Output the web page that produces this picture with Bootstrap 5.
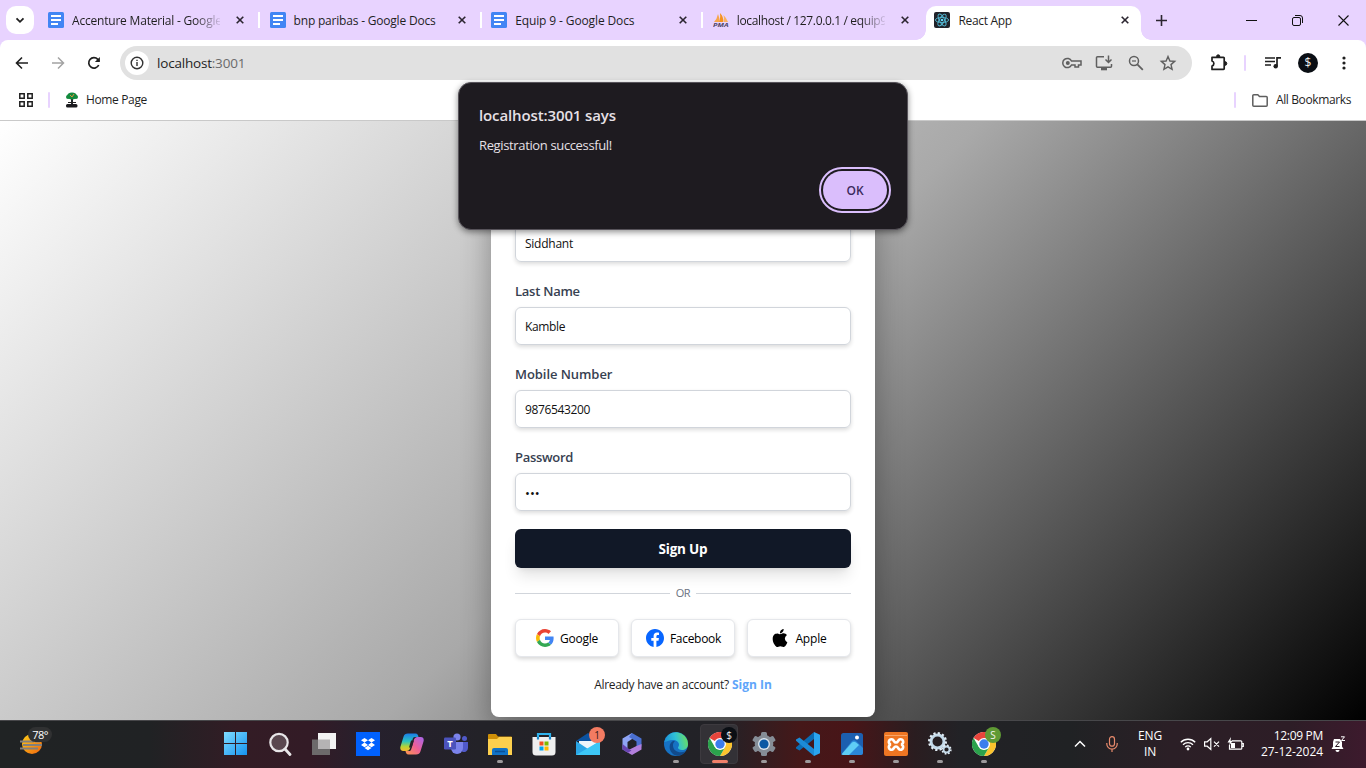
<!DOCTYPE html>
<html lang="en">
<head>
<meta charset="utf-8">
<title>React App</title>
<link href="https://cdn.jsdelivr.net/npm/bootstrap@5.3.0/dist/css/bootstrap.min.css" rel="stylesheet">
<script src="https://cdn.jsdelivr.net/npm/bootstrap@5.3.0/dist/js/bootstrap.bundle.min.js"></script>
<style>
body{width:1366px;height:768px;overflow:hidden;font-family:"Open Sans","Noto Sans",sans-serif;font-size:12px;line-height:16px;color:#1f1f1f;background:#fff}
svg{display:block;flex:none}
.t{white-space:nowrap;display:inline-block}
.ls0{letter-spacing:-.06px}.ls1{letter-spacing:-.12px}.ls2{letter-spacing:-.2px}.ls25{letter-spacing:-.25px}.ls3{letter-spacing:-.3px}.ls35{letter-spacing:-.36px}
.strip{height:40px;background:#e8d3ff;padding-left:6px}
.tabmenu{width:28px;height:28px;border-radius:10px;background:#fff;margin-right:6px}
.tabslot{width:221.6px;height:28px;padding-left:8px}
.tabslot .cap{width:148px;margin-left:8px;padding-top:1px;flex:none}
.fade-end{-webkit-mask-image:linear-gradient(90deg,#000 83%,transparent 102%)}
.tabslot::after{content:"";width:2px;height:16px;background:#fff;margin-left:14px}
.tabslot.last::after{display:none}
.tabnow{width:215px;height:34px;background:#fff;border-radius:10px 10px 0 0;padding:0 11px 6px 8px;position:relative;align-self:flex-end}
.tabnow::before,.tabnow::after{content:"";position:absolute;bottom:0;width:10px;height:10px}
.tabnow::before{left:-10px;background:radial-gradient(circle at 0 0,transparent 9.5px,#fff 10px)}
.tabnow::after{right:-10px;background:radial-gradient(circle at 100% 0,transparent 9.5px,#fff 10px)}
.wrapbars{background:#e8d3ff}
.bars{background:#fff;border-radius:8px 8px 0 0;height:81px;border-bottom:1px solid #c9c9c9}
.toolbar{height:46px}
.omni{width:1072px;height:34px;border-radius:17px;background:#e1e1e1;padding-left:5px;padding-right:15px}
.infodot{width:24px;height:24px;border-radius:50%;background:#fff}
.vsep{width:2px;height:16px;background:#e8d3ff;border-radius:1px}
.page{height:599px;background:linear-gradient(135deg,#fff,#a9a9a9,#000);overflow:hidden;padding-bottom:3px}
.signup{width:384px;height:567px;background:#fff;border-radius:8px;padding:74px 24px 0;box-shadow:0 10px 30px rgba(0,0,0,.32)}
.signup label{height:20px;line-height:20px;margin-top:19px;margin-bottom:6px;font-size:13px;font-weight:600;color:#374151;display:block}
.field{height:38px;border:1px solid #d1d5db;border-radius:6px;padding:1px 9px 0;box-shadow:0 2px 4px rgba(0,0,0,.14);color:#111;display:flex;align-items:center}
.go{height:39px;border-radius:6px;background:#111827;color:#fff;font-weight:700;font-size:13.5px;margin-top:18px;padding:1px 0 0;box-shadow:0 10px 15px -3px rgba(0,0,0,.12),0 4px 6px -4px rgba(0,0,0,.1);border:0}
.orline{height:1px;background:#d1d5db}
.social{width:104px;height:38px;border:1px solid #e5e7eb;border-radius:6px;background:#fff;box-shadow:0 2px 4px rgba(0,0,0,.16);color:#000;gap:6px}
.social .t{padding-top:1px}
.alertbox{position:absolute;left:458px;top:82px;width:450px;height:148px;background:#1e1b20;border:1px solid #57535a;border-radius:13px;padding:0 16px 16px 20px;color:#e6e0e6;box-shadow:0 2px 6px rgba(0,0,0,.45)}
.okbtn{width:64px;height:38px;border-radius:19px;background:#dabefc;color:#3c2a5c;border:0;outline:2px solid #dabefc;outline-offset:2px;font-weight:600;font-size:12px;padding:2px 0 0}
.taskbar{height:48px;border-top:1px solid #47474a;padding-bottom:2px;color:#fff;background:linear-gradient(90deg,#202324 0,#202224 150px,#331c25 240px,#331b26 310px,#26202d 370px,#232228 480px,#222227 720px,#451819 800px,#481518 850px,#2a1d20 915px,#222226 960px,#202224 1070px,#2b1f26 1170px,#2d1d26 1290px,#3d1a2d 1366px)}
.slot{width:44px;height:45px;position:relative}
.slot.open::after{content:"";position:absolute;left:19px;bottom:3px;width:6px;height:3px;border-radius:2px;background:#9d9a9c}
.slot.now{z-index:0}
.slot.now::before{content:"";position:absolute;left:2px;top:3px;width:38px;height:40px;border-radius:4px;background:#333136;border:1px solid #3d3a3f;z-index:-1}
.slot.now::after{left:14px;width:16px;background:#f0806a}
.bub{position:absolute;border-radius:50%;width:16px;height:16px;line-height:16px;text-align:center;font-size:10px}
.weather{width:214px;padding-left:20px}
.temp{left:28px;top:-3px;width:24px;height:15px;line-height:15px;border-radius:8px;background:#303132;font-size:11px;text-align:center;letter-spacing:-.6px}
</style>
</head>
<body class="d-flex flex-column">
<svg width="0" height="0" class="position-absolute">
  <defs>
    <symbol id="doc" viewBox="0 0 16 16"><rect width="16" height="16" rx="1.500" fill="#4285f4"/><path d="M3 4h10M3 8h10M3 12h7" stroke="#fff" stroke-width="1.800"/></symbol>
    <symbol id="x" viewBox="0 0 8 8"><path d="M.7.7l6.600 6.600M7.300.7L.7 7.300" stroke="#2b2530" stroke-width="1.600"/></symbol>
    <symbol id="chrome" viewBox="0 0 24 24"><circle cx="12" cy="12" r="12" fill="#fff"/><path d="M12 12L1.600 6A12 12 0 0 1 22.400 6z" fill="#e8453c"/><path d="M12 6h10.400A12 12 0 0 1 12 24l5.200-9z" fill="#fbc42d"/><path d="M1.600 6l5.200 9L12 18l5.200-3L12 24A12 12 0 0 1 1.600 6z" fill="#2ba24c"/><circle cx="12" cy="12" r="6" fill="#fff"/><circle cx="12" cy="12" r="4.700" fill="#3b7ded"/></symbol>
    <linearGradient id="gw" x1="0" y1="0" x2="1" y2="1"><stop offset="0" stop-color="#7fdcff"/><stop offset="1" stop-color="#1593f0"/></linearGradient>
    <linearGradient id="gsun" x1="0" y1="0" x2="1" y2="1"><stop offset="0" stop-color="#ffd018"/><stop offset="1" stop-color="#ee6410"/></linearGradient>
    <linearGradient id="gcl" x1="0" y1="0" x2="0" y2="1"><stop offset="0" stop-color="#1b7de8"/><stop offset=".45" stop-color="#2ac4c0"/><stop offset=".75" stop-color="#b7d334"/><stop offset="1" stop-color="#f7b92f"/></linearGradient>
    <linearGradient id="gcr" x1="1" y1="0" x2="0" y2="1"><stop offset="0" stop-color="#a566f0"/><stop offset=".5" stop-color="#ee5f96"/><stop offset="1" stop-color="#fd9a4c"/></linearGradient>
    <linearGradient id="ge" x1="0" y1=".5" x2="1" y2=".3"><stop offset="0" stop-color="#1b8fd8"/><stop offset=".5" stop-color="#2fc1d6"/><stop offset="1" stop-color="#6de05a"/></linearGradient>
  </defs>
</svg>

<header class="strip d-flex align-items-center">
  <div class="tabmenu d-flex align-items-center justify-content-center"><svg width="10" height="7"><path d="M1.500 1.300L5 4.800l3.500-3.500" fill="none" stroke="#1f1f1f" stroke-width="1.800"/></svg></div>
  <div class="tabslot d-flex align-items-center"><svg width="16" height="16"><use href="#doc"/></svg><div class="cap fade-end"><span class="t ls2">Accenture Material - Google</span></div><svg class="ms-3" width="8" height="8"><use href="#x"/></svg></div>
  <div class="tabslot d-flex align-items-center"><svg width="16" height="16"><use href="#doc"/></svg><div class="cap"><span class="t ls2">bnp paribas - Google Docs</span></div><svg class="ms-3" width="8" height="8"><use href="#x"/></svg></div>
  <div class="tabslot d-flex align-items-center"><svg width="16" height="16"><use href="#doc"/></svg><div class="cap"><span class="t ls1">Equip 9 - Google Docs</span></div><svg class="ms-3" width="8" height="8"><use href="#x"/></svg></div>
  <div class="tabslot last d-flex align-items-center"><svg width="16" height="16" viewBox="0 0 16 16"><path d="M1 10Q4 7 5 2q2 4 1 8z" fill="#f7a54a"/><path d="M6 10q2-5 1-9 4 4 3 9z" fill="#f6921e"/><path d="M10.500 10q1-4 0-7 3 3 4.500 7z" fill="#f9b262"/><text x="0" y="15.300" font-size="6" font-weight="700" font-style="italic" textLength="15.500" lengthAdjust="spacingAndGlyphs" fill="#4c4566">PMA</text></svg><div class="cap fade-end"><span class="t ls35">localhost / 127.0.0.1 / equip9</span></div><svg class="ms-3" width="8" height="8"><use href="#x"/></svg></div>
  <div class="tabnow d-flex align-items-center">
    <svg width="16" height="16" viewBox="0 0 16 16"><rect width="16" height="16" rx="2" fill="#20232a"/><g fill="none" stroke="#53b9d4" stroke-width=".9"><ellipse cx="8" cy="8" rx="6.600" ry="2.600"/><ellipse cx="8" cy="8" rx="6.600" ry="2.600" transform="rotate(60 8 8)"/><ellipse cx="8" cy="8" rx="6.600" ry="2.600" transform="rotate(120 8 8)"/></g><circle cx="8" cy="8" r="1.300" fill="#61dafb"/></svg>
    <span class="t ls3 ms-2 pt-1" style="margin-top:-2px">React App</span>
    <svg class="ms-auto" width="9" height="9"><use href="#x" width="8" height="8"/></svg>
  </div>
  <svg width="11" height="11" style="margin-left:15px"><path d="M5.500 0v11M0 5.500h11" stroke="#2b2530" stroke-width="1.600"/></svg>
  <div class="d-flex align-items-center ms-auto" style="padding-right:17px;gap:35px">
    <svg width="11" height="11"><path d="M0 5.500h11" stroke="#111" stroke-width="1"/></svg>
    <svg width="11" height="11"><rect x=".5" y="2.500" width="8" height="8" rx="1.500" fill="none" stroke="#111"/><path d="M3 .5h5a2.500 2.500 0 0 1 2.500 2.500v5" fill="none" stroke="#111"/></svg>
    <svg width="11" height="11"><path d="M.5.5l10 10M10.500.5l-10 10" stroke="#111" stroke-width="1.100"/></svg>
  </div>
</header>

<div class="wrapbars"><div class="bars">
  <div class="toolbar d-flex align-items-center">
    <svg width="14" height="14" style="margin-left:15px"><path d="M13 7H2M7 1.500L1.500 7 7 12.500" fill="none" stroke="#1f1f1f" stroke-width="1.600"/></svg>
    <svg width="14" height="14" style="margin-left:22px"><path d="M1 7h11M7 1.500L12.500 7 7 12.500" fill="none" stroke="#a3a3a3" stroke-width="1.500"/></svg>
    <svg width="14" height="14" style="margin-left:22px"><path d="M11.700 9A5.200 5.200 0 1 1 10.800 3.400L12 4.800" fill="none" stroke="#1f1f1f" stroke-width="1.700"/><path d="M12.900 1v5H7.900z" fill="#1f1f1f"/></svg>
    <div class="omni d-flex align-items-center" style="margin-left:19px">
      <div class="infodot d-flex align-items-center justify-content-center"><svg width="14" height="14"><circle cx="7" cy="7" r="5.800" fill="none" stroke="#333" stroke-width="1.400"/><path d="M7 6v4M7 3.700v1.400" stroke="#333" stroke-width="1.400"/></svg></div>
      <span class="t ls2 ms-2" style="font-size:13.500px">localhost<span style="color:#6b6b6b">:3001</span></span>
      <div class="d-flex align-items-center ms-auto" style="gap:14px">
        <svg width="20" height="18" viewBox="0 0 20 18" style="margin-right:-1px"><path d="M9.500 7a4.600 4.600 0 1 0 0 4H13v2h3.500v-2H19V7z" fill="none" stroke="#5f5f5f" stroke-width="1.500"/><circle cx="5.800" cy="9" r="2" fill="#5f5f5f"/></svg>
        <svg width="18" height="18" viewBox="0 0 18 18"><path d="M9 2.700H2.500a1 1 0 0 0-1 1v8.600a1 1 0 0 0 1 1h13a1 1 0 0 0 1-1V10M13.500 1.500v6.500M10.500 5.500l3 3 3-3" fill="none" stroke="#5f5f5f" stroke-width="1.500"/><path d="M6 14h6v2.300H6z" fill="#5f5f5f"/></svg>
        <svg width="18" height="18" viewBox="0 0 18 18"><circle cx="7" cy="7" r="4.500" fill="none" stroke="#5f5f5f" stroke-width="1.500"/><path d="M10.300 10.300l5.500 5.500" stroke="#5f5f5f" stroke-width="1.800"/><path d="M5 7h4" stroke="#5f5f5f" stroke-width="1.200"/></svg>
        <svg width="18" height="18" viewBox="0 0 18 18"><path d="M9 2.500l1.900 4.500 4.800.4-3.700 3.200 1.100 4.800L9 12.900l-4.100 2.500L6 10.600 2.300 7.400 7.100 7z" fill="none" stroke="#5f5f5f" stroke-width="1.400"/></svg>
      </div>
    </div>
    <svg width="18" height="18" viewBox="0 0 18 18" style="margin-left:18px"><path d="M2 3.300h11.500a.7.700 0 0 1 .7.700v10.700a.7.700 0 0 1-.7.700H2V12c2.500-.6 2.500-4.400 0-5z" fill="none" stroke="#1f1f1f" stroke-width="1.700" stroke-linejoin="round"/><path d="M6.500 2.500a1.700 1.700 0 0 1 3.400 0zM15 7.700a1.800 1.800 0 0 1 0 3.600z" fill="#1f1f1f" stroke="#1f1f1f"/></svg>
    <div class="vsep" style="margin-left:16px"></div>
    <svg width="16" height="14" viewBox="0 0 16 14" style="margin-left:19px"><path d="M0 2h10M0 5.500h10M0 9h6M12 1v9M11.500 1.800H16" fill="none" stroke="#1f1f1f" stroke-width="1.700"/><circle cx="10.700" cy="10.300" r="2.200" fill="#1f1f1f"/></svg>
    <svg width="20" height="20" viewBox="0 0 20 20" style="margin-left:17px"><circle cx="10" cy="10" r="10" fill="#0a0e14"/><text x="10" y="14.200" text-anchor="middle" font-size="12" fill="#eee">$</text></svg>
    <svg width="4" height="14" style="margin-left:24px"><g fill="#1f1f1f"><circle cx="2" cy="2" r="1.600"/><circle cx="2" cy="7" r="1.600"/><circle cx="2" cy="12" r="1.600"/></g></svg>
  </div>
  <div class="d-flex align-items-center" style="height:28px">
    <svg width="14" height="14" style="margin-left:19px"><path d="M.8.8h4.400v4.400H.8zM8.800.8h4.400v4.400H8.800zM.8 8.800h4.400v4.400H.8zM8.800 8.800h4.400v4.400H8.800z" fill="none" stroke="#1f1f1f" stroke-width="1.500"/></svg>
    <div class="vsep" style="margin-left:15px"></div>
    <svg width="14" height="16" viewBox="0 0 14 16" style="margin-left:15px"><path d="M7 5v9" stroke="#20252a" stroke-width="2"/><ellipse cx="7" cy="4" rx="5" ry="3.500" fill="#128a3d"/><circle cx="3" cy="5" r="2" fill="#128a3d"/><circle cx="11" cy="5" r="2" fill="#128a3d"/><path d="M5 3l2 2 2-3" stroke="#e0913c" fill="none"/><path d="M3 10.500h8" stroke="#222" stroke-width="1"/><rect x="1" y="12" width="11.500" height="3.600" rx="1.500" fill="#1b1b1f"/></svg>
    <span class="t ls35" style="margin-left:7px">Home Page</span>
    <div class="vsep ms-auto"></div>
    <svg width="16" height="13" viewBox="0 0 16 13" style="margin-left:16px"><path d="M.8 1.800a1 1 0 0 1 1-1h4l1.700 1.700h6.700a1 1 0 0 1 1 1v7.700a1 1 0 0 1-1 1H1.800a1 1 0 0 1-1-1z" fill="none" stroke="#5f5f5f" stroke-width="1.500"/></svg>
    <span class="t" style="margin-left:8px;margin-right:15px;letter-spacing:-.38px">All Bookmarks</span>
  </div>
</div></div>

<main class="page d-flex justify-content-center align-items-end flex-shrink-0">
  <form class="signup">
    <div class="field"><span class="t ls25">Siddhant</span></div>
    <label><span class="t ls25">Last Name</span></label>
    <div class="field"><span class="t ls35">Kamble</span></div>
    <label><span class="t ls0">Mobile Number</span></label>
    <div class="field"><span class="t ls35">9876543200</span></div>
    <label><span class="t ls3">Password</span></label>
    <div class="field"><span class="t" style="font-size:13px">•••</span></div>
    <button type="button" class="go w-100 d-flex align-items-center justify-content-center"><span class="t ls2">Sign Up</span></button>
    <div class="d-flex align-items-center" style="height:16px;margin-top:17px"><div class="orline flex-fill"></div><span class="t text-center" style="width:26px;color:#6b7280;font-size:11px;letter-spacing:-.5px">OR</span><div class="orline flex-fill"></div></div>
    <div class="d-flex" style="gap:12px;margin-top:18px">
      <div class="social d-flex align-items-center justify-content-center"><svg width="18" height="18" viewBox="0 0 48 48"><path fill="#EA4335" d="M24 9.500c3.540 0 6.710 1.220 9.210 3.600l6.850-6.850C35.900 2.380 30.470 0 24 0 14.620 0 6.510 5.380 2.560 13.220l7.980 6.190C12.430 13.720 17.740 9.500 24 9.500z"/><path fill="#4285F4" d="M46.980 24.550c0-1.570-.15-3.090-.38-4.550H24v9.020h12.940c-.58 2.960-2.260 5.480-4.780 7.180l7.730 6c4.510-4.180 7.090-10.360 7.090-17.650z"/><path fill="#FBBC05" d="M10.530 28.590c-.48-1.450-.76-2.990-.76-4.590s.27-3.140.76-4.590l-7.980-6.190C.92 16.460 0 20.120 0 24c0 3.880.92 7.540 2.560 10.780l7.970-6.190z"/><path fill="#34A853" d="M24 48c6.480 0 11.930-2.130 15.890-5.810l-7.730-6c-2.150 1.450-4.920 2.300-8.160 2.300-6.260 0-11.570-4.220-13.470-9.910l-7.980 6.190C6.510 42.620 14.620 48 24 48z"/></svg><span class="t ls2">Google</span></div>
      <div class="social d-flex align-items-center justify-content-center" style="padding-left:1px"><svg width="18" height="18" viewBox="0 0 16 16"><circle cx="8" cy="8" r="7.900" fill="#fff"/><path fill="#0866ff" d="M16 8.049c0-4.446-3.582-8.050-8-8.050C3.580 0-.002 3.603-.002 8.050c0 4.017 2.926 7.347 6.750 7.951v-5.625h-2.030V8.050H6.750V6.275c0-2.017 1.195-3.131 3.022-3.131.876 0 1.791.157 1.791.157v1.980h-1.009c-.993 0-1.303.621-1.303 1.258v1.510h2.218l-.354 2.326H9.250V16c3.824-.604 6.750-3.934 6.750-7.951"/></svg><span class="t ls3">Facebook</span></div>
      <div class="social d-flex align-items-center justify-content-center"><svg width="18" height="18" viewBox="0 0 16 16"><path d="M11.182.008C11.148-.030 9.923.023 8.857 1.180c-1.066 1.156-.902 2.482-.878 2.516s1.520.087 2.475-1.258.762-2.391.728-2.430m3.314 11.733c-.048-.096-2.325-1.234-2.113-3.422s1.675-2.789 1.698-2.854-.597-.790-1.254-1.157a3.700 3.700 0 0 0-1.563-.434c-.108-.003-.483-.095-1.254.116-.508.139-1.653.589-1.968.607-.316.018-1.256-.522-2.267-.665-.647-.125-1.333.131-1.824.328-.490.196-1.422.754-2.074 2.237-.652 1.482-.311 3.830-.067 4.560s.625 1.924 1.273 2.796c.576.984 1.340 1.667 1.659 1.899s1.219.386 1.843.067c.502-.308 1.408-.485 1.766-.472.357.013 1.061.154 1.782.539.571.197 1.111.115 1.652-.105.541-.221 1.324-1.059 2.238-2.758q.520-1.185.473-1.282"/></svg><span class="t ls2">Apple</span></div>
    </div>
    <div class="text-center" style="margin-top:20px"><span class="t ls3">Already have an account?</span><span class="t" style="color:#60a5fa;font-weight:700;margin-left:3px">Sign In</span></div>
  </form>
</main>

<footer class="taskbar d-flex align-items-center flex-shrink-0">
  <div class="weather position-relative">
    <svg width="34" height="28" viewBox="0 0 34 28"><circle cx="12" cy="14" r="10" fill="url(#gsun)"/><path d="M0 11.500h14M15 11.500h5M3 15h19M0 18.500h18" stroke="#83807c" stroke-width="1.800"/></svg>
    <span class="t temp position-absolute">78°</span>
  </div>
  <div class="slot d-flex align-items-center justify-content-center"><svg width="23" height="23" style="margin-right:1px"><path fill="url(#gw)" d="M0 0h11v11H0zM12 0h11v11H12zM0 12h11v11H0zM12 12h11v11H12z"/></svg></div>
  <div class="slot d-flex align-items-center justify-content-center"><svg width="24" height="24"><circle cx="11" cy="10.500" r="8.700" fill="#5a474f" stroke="#e8e6e8" stroke-width="2.200"/><path d="M17 17l5 5.500" stroke="#e8e6e8" stroke-width="2.800" stroke-linecap="round"/></svg></div>
  <div class="slot d-flex align-items-center justify-content-center"><svg width="24" height="24"><rect x="0" y="7.500" width="18" height="15.500" fill="#6c6a6b"/><rect x="6" y="1" width="18" height="16" fill="#f3f3f3"/><rect x="6" y="7.500" width="12" height="9.500" fill="#b5b3b4"/></svg></div>
  <div class="slot d-flex align-items-center justify-content-center"><svg width="24" height="24"><path fill="#0061fe" d="M0 0h24v24H0z"/><path fill="#fff" d="M8.500 6L12 8.300 8.500 10.600 5 8.300zM15.500 6L19 8.300l-3.500 2.300L12 8.300zM8.500 10.600L12 12.900l-3.500 2.300L5 12.900zM15.500 10.600l3.500 2.300-3.500 2.300-3.500-2.300zM12 13.700l3.500 2.300-3.500 2.200L8.500 16z"/></svg></div>
  <div class="slot d-flex align-items-center justify-content-center"><svg width="24" height="24"><path d="M8 1.500h7.500c2 0 2.500 1.500 3 3.500H15c-1.500 0-2 .8-2.400 2.300L10.500 15c-1 3-2 4-4 4H3.200c-2.500 0-3.400-2-2.700-4.400L3.500 4.800C4.200 2.500 5.500 1.500 8 1.500z" fill="url(#gcl)"/><path d="M16 22.500H8.500c-2 0-2.500-1.500-3-3.500H9c1.500 0 2-.8 2.400-2.300L13.500 9c1-3 2-4 4-4h3.300c2.500 0 3.400 2 2.700 4.400l-3 9.800c-.7 2.300-2 3.300-4.500 3.300z" fill="url(#gcr)"/><path d="M11 8.500h3l-2.200 7H9z" fill="#2a2128"/></svg></div>
  <div class="slot d-flex align-items-center justify-content-center"><svg width="24" height="24"><circle cx="13" cy="5" r="3.600" fill="#7b83eb"/><circle cx="20.500" cy="6.500" r="2.500" fill="#5059c9"/><path d="M17 10h7v6a4 4 0 0 1-6 3.500z" fill="#5059c9"/><path d="M7 10h12v6a6 6 0 0 1-12 0z" fill="#7b83eb"/><rect x="0" y="5.500" width="12" height="12" rx="1.200" fill="#4b53bc"/><text x="6" y="15" text-anchor="middle" font-size="9.500" font-weight="700" fill="#fff">T</text></svg></div>
  <div class="slot open d-flex align-items-center justify-content-center"><svg width="24" height="24"><path d="M0 3a1 1 0 0 1 1-1h7l2 2.500h13a1 1 0 0 1 1 1V12H0z" fill="#cf9008"/><path d="M0 7h9l2-2h13v18H0z" fill="#fdd04e"/><path d="M4 23v-5a2 2 0 0 1 2-2h12a2 2 0 0 1 2 2v5z" fill="#1173c6"/><path d="M7 19.500h10" stroke="#0a4f94" stroke-width="1.500"/></svg></div>
  <div class="slot d-flex align-items-center justify-content-center"><svg width="24" height="24"><path d="M6 6V2h12v4" fill="none" stroke="#2eb3ee" stroke-width="2.200"/><path d="M.5 5h23v15a3.500 3.500 0 0 1-3.500 3.500H4A3.500 3.500 0 0 1 .5 20z" fill="#efefef"/><path d="M6 5v2.500M18 5v2.500" stroke="#1a86c8" stroke-width="2.200"/><path fill="#f25022" d="M7.500 9.500h4v4h-4z"/><path fill="#7fba00" d="M12.500 9.500h4v4h-4z"/><path fill="#00a4ef" d="M7.500 14.500h4v4h-4z"/><path fill="#ffb900" d="M12.500 14.500h4v4h-4z"/></svg></div>
  <div class="slot d-flex align-items-center justify-content-center"><svg width="24" height="24"><path d="M0 9l12-8 12 8z" fill="#0b52a0"/><path d="M3 9h18v8H3z" fill="#eef5fb"/><path d="M0 9l12 8 12-8v14H0z" fill="#2ba6e6"/><path d="M0 23L24 9v14z" fill="#3dc7f6"/></svg><span class="bub" style="left:23px;top:6px;background:#f37b62;color:#321a18">1</span></div>
  <div class="slot d-flex align-items-center justify-content-center"><svg width="24" height="24"><path d="M12 1L2.500 6.500v11l5 2.500V10l4.500-3z" fill="#8fa4f5"/><path d="M12 1l9.500 5.500v8L16.500 15V9.500L9 5z" fill="#4a6fd0"/><path d="M21.500 12v5.500L12 23l-7-4 5.500-2 6-3z" fill="#b27fdc"/><path d="M2.500 12v5.500L8 20.700l3.500-2.200-4-2.500z" fill="#6844b0"/></svg></div>
  <div class="slot open d-flex align-items-center justify-content-center"><svg width="24" height="24"><circle cx="12" cy="12" r="12" fill="#1672c4"/><path d="M.2 10A12 12 0 0 1 24 12c0 4-3 6-6 6-2.500 0-4-1-4-2.200 0-.8 1-1.300 1-3.300 0-2.500-3-4.500-6-4.500-4 0-7 2-8.800 2z" fill="url(#ge)"/><path d="M9 9c-4 2-4.500 8-1 12 1.500 1.700 3.500 2.700 6 2.700 3 0 6-1.700 7.800-4.400C15 22 9.500 19 9 14c-.2-2 .5-4 2-5z" fill="#114a8b"/></svg></div>
  <div class="slot open now d-flex align-items-center justify-content-center"><svg width="24" height="24"><use href="#chrome"/></svg><span class="bub" style="left:23px;top:6px;background:#0a0e14;color:#eee">$</span></div>
  <div class="slot open d-flex align-items-center justify-content-center"><svg width="24" height="24" viewBox="0 0 24 24"><g fill="#858d96"><circle cx="12" cy="12" r="9.300"/><rect x="9" y="0" width="6" height="24" rx="1.500"/><rect x="9" y="0" width="6" height="24" rx="1.500" transform="rotate(60 12 12)"/><rect x="9" y="0" width="6" height="24" rx="1.500" transform="rotate(120 12 12)"/></g><circle cx="12" cy="12" r="6" fill="#d9e3ec"/><circle cx="12" cy="12" r="4.600" fill="#0c59a4"/></svg></div>
  <div class="slot open d-flex align-items-center justify-content-center"><svg width="24" height="24"><path d="M18 0l6 2.800v18.400L18 24z" fill="#2aa5ef"/><path d="M18 0v7L3.500 18.500 0 16.500v-1.200z" fill="#0a6cb4"/><path d="M18 24v-7L3.500 5.500 0 7.500v1.200z" fill="#1c8bd6"/></svg></div>
  <div class="slot open d-flex align-items-center justify-content-center"><svg width="24" height="24"><defs><clipPath id="cp"><rect x="1" y="1" width="22" height="22" rx="2.500"/></clipPath></defs><g clip-path="url(#cp)"><path d="M0 0h24v24H0z" fill="#1c5fb0"/><path d="M0 24L12 9q2-1.500 4 0l8 8v7z" fill="#2b87d8"/><path d="M0 24L12 10.500q2-1.500 4 0L19 13 8 24z" fill="#5fcdf5"/></g><circle cx="17" cy="5.500" r="2" fill="#fff"/></svg></div>
  <div class="slot open d-flex align-items-center justify-content-center"><svg width="24" height="24"><rect width="24" height="24" rx="2" fill="#ee7623"/><path d="M1 3.500h22" stroke="#f9a466" stroke-width="1"/><path d="M8.500 7.500c-4-1.500-5 4.500-1.500 5-3.500.5-2.500 6.500 1.500 5 1.500-.7 1.500-3 3.500-3s2 2.300 3.500 3c4 1.500 5-4.500 1.500-5 3.500-.5 2.500-6.500-1.500-5-1.500.7-1.500 3-3.500 3s-2-2.300-3.500-3z" fill="none" stroke="#fff" stroke-width="2.700"/></svg></div>
  <div class="slot open d-flex align-items-center justify-content-center"><svg width="24" height="24"><circle cx="9.500" cy="9.500" r="6.500" fill="none" stroke="#c4daea" stroke-width="3"/><circle cx="9.500" cy="9.500" r="8.400" fill="none" stroke="#e3eef6" stroke-width="2.200" stroke-dasharray="2.200 2.200"/><circle cx="18.500" cy="17.500" r="3" fill="none" stroke="#c4daea" stroke-width="1.800"/><circle cx="18.500" cy="17.500" r="4.400" fill="none" stroke="#e3eef6" stroke-width="1.500" stroke-dasharray="1.700 1.750"/></svg></div>
  <div class="slot open d-flex align-items-center justify-content-center"><svg width="24" height="24"><use href="#chrome"/></svg><span class="bub" style="left:23px;top:6px;background:#5f9a34;color:#f2f5ee">S</span></div>
  <div class="d-flex align-items-center ms-auto">
    <svg width="12" height="8"><path d="M1 6.500l5-5 5 5" fill="none" stroke="#fff" stroke-width="1.500"/></svg>
    <svg width="12" height="16" style="margin-left:20px"><rect x="3.500" y=".7" width="5" height="9.500" rx="2.500" fill="none" stroke="#e88a6c" stroke-width="1.200"/><path d="M.8 7v1a5.200 5.200 0 0 0 10.400 0V7M6 13v3" fill="none" stroke="#e88a6c" stroke-width="1.200"/></svg>
    <div class="text-center" style="margin-left:19px;width:26px"><span class="t ls1">ENG</span><br><span class="t ls1">IN</span></div>
    <svg width="16" height="14" viewBox="0 0 16 14" style="margin-left:17px"><g fill="none" stroke="#fff" stroke-width="1.300"><path d="M.8 5.300a10 10 0 0 1 14.400 0M3 7.800a7 7 0 0 1 10 0M5.200 10.100a4 4 0 0 1 5.600 0"/></g><circle cx="8" cy="12" r="1.400" fill="#fff"/></svg>
    <svg width="16" height="14" viewBox="0 0 16 14" style="margin-left:8px"><path d="M.6 4.800h2.600L6.800 1.500v11L3.200 9.200H.6zM10 4.700l5 5M15 4.700l-5 5" fill="none" stroke="#fff" stroke-width="1.200"/></svg>
    <svg width="17" height="14" viewBox="0 0 17 14" style="margin-left:7px"><path d="M5 3.800h8.800a1 1 0 0 1 1 1v6.400a1 1 0 0 1-1 1H2.500V8M15 6.500h1.300v3H15" fill="none" stroke="#fff" stroke-width="1.200"/><path d="M4 6h4v5H4zM4 0L.5 5.500h2.300L2 9l3.700-5.300H3.500z" fill="#fff"/></svg>
    <div class="text-end" style="margin-left:16px;width:63px"><span class="t ls3">12:09 PM</span><br><span class="t ls0">27-12-2024</span></div>
    <svg width="15" height="16" viewBox="0 0 15 16" style="margin-left:8px;margin-right:20px"><path d="M3 3h6l2 3v4.500l1.500 2.500H.5L2 10.500V6z" fill="#fff"/><path d="M4.500 14a2 2 0 0 0 4 0z" fill="#fff"/><path d="M10 .8h3.500L10.500 4.500H14" stroke="#fff" fill="none"/><path d="M4.500 6h4l-4 4.500h4" stroke="#2d1d26" fill="none"/></svg>
  </div>
</footer>

<div class="alertbox d-flex flex-column">
  <div style="margin-top:21px;height:22px;line-height:22px;font-size:15px;font-weight:600"><span class="t ls1">localhost:3001 says</span></div>
  <div style="margin-top:11px;font-size:13px"><span class="t ls35">Registration successful!</span></div>
  <button type="button" class="okbtn ms-auto mt-auto" style="margin-right:4px;margin-bottom:4px">OK</button>
</div>
</body>
</html>
